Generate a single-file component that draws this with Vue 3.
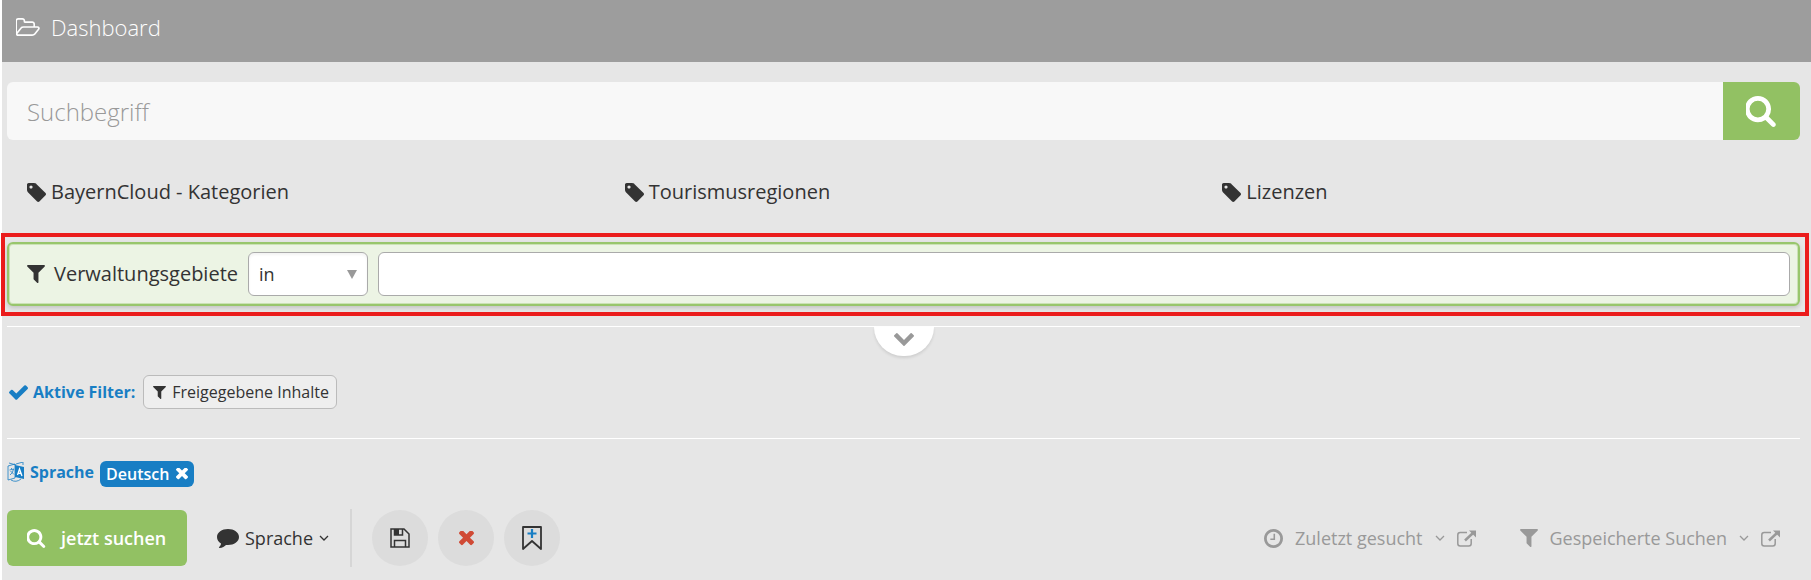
<script setup>
import { ref, h } from 'vue'

const query = ref('')
const area = ref('')
const operator = ref('in')
const categories = ['BayernCloud - Kategorien', 'Tourismusregionen', 'Lizenzen']

const icons = {
  search: ['128 128 1664 1664', 'M1216 832q0-185-131.5-316.5t-316.5-131.5-316.5 131.5-131.5 316.5 131.5 316.5 316.5 131.5 316.5-131.5 131.5-316.5zm512 832q0 52-38 90t-90 38q-54 0-90-38l-343-342q-179 124-399 124-143 0-273.5-55.5t-225-150-150-225-55.5-273.5 55.5-273.5 150-225 225-150 273.5-55.5 273.5 55.5 225 150 150 225 55.5 273.5q0 220-124 399l343 343q37 37 37 90z'],
  filter: ['190 256 1412 1408', 'M1595 295q17 41-14 70l-493 493v742q0 42-39 59-13 5-25 5-27 0-45-19l-256-256q-19-19-19-45v-486l-493-493q-31-29-14-70 17-39 59-39h1280q42 0 59 39z'],
  times: ['302 434 1188 1188', 'M1490 1322q0 40-28 68l-136 136q-28 28-68 28t-68-28l-294-294-294 294q-28 28-68 28t-68-28l-136-136q-28-28-28-68t28-68l294-294-294-294q-28-28-28-68t28-68l136-136q28-28 68-28t68 28l294 294 294-294q28-28 68-28t68 28l136 136q28 28 28 68t-28 68l-294 294 294 294q28 28 28 68z'],
  check: ['121 334 1550 1188', 'M1671 566q0 40-28 68l-724 724-136 136q-28 28-68 28t-68-28l-136-136-362-362q-28-28-28-68t28-68l136-136q28-28 68-28t68 28l294 295 656-657q28-28 68-28t68 28l136 136q28 28 28 68z'],
  tag: ['128 128 1515 1515', 'M576 448q0-53-37.5-90.5t-90.5-37.5-90.5 37.5-37.5 90.5 37.5 90.5 90.5 37.5 90.5-37.5 37.5-90.5zm1067 576q0 53-37 90l-491 492q-39 37-91 37-53 0-90-37l-715-716q-38-37-64.5-101t-26.5-117v-416q0-52 38-90t90-38h416q53 0 117 26.5t102 64.5l715 714q37 39 37 91z'],
  folder: ['0 128 1845 1408', 'M1717 931q0-35-53-35h-1088q-40 0-85.5 21.5t-71.5 52.5l-294 363q-18 24-18 40 0 35 53 35h1088q40 0 86-22t71-53l294-363q18-22 18-39zm-1141-163h768v-160q0-40-28-68t-68-28h-576q-40 0-68-28t-28-68v-64q0-40-28-68t-68-28h-320q-40 0-68 28t-28 68v853l256-315q44-53 116-87.5t140-34.5zm1269 163q0 62-46 120l-295 363q-43 53-116 87.5t-140 34.5h-1088q-92 0-158-66t-66-158v-960q0-92 66-158t158-66h320q92 0 158 66t66 158v32h544q92 0 158 66t66 158v160h192q54 0 99 24.5t67 70.5q15 32 15 68z'],
  clock: ['128 128 1536 1536', 'M1024 544v448q0 14-9 23t-23 9h-320q-14 0-23-9t-9-23v-64q0-14 9-23t23-9h224v-352q0-14 9-23t23-9h64q14 0 23 9t9 23zm416 352q0-148-73-273t-198-198-273-73-273 73-198 198-73 273 73 273 198 198 273 73 273-73 198-198 73-273zm224 0q0 209-103 385.5t-279.5 279.5-385.5 103-385.5-103-279.5-279.5-103-385.5 103-385.5 279.5-279.5 385.5-103 385.5 103 279.5 279.5 103 385.5z'],
  chevron: ['90 533 1612 1035', 'M1683 808l-742 741q-19 19-45 19t-45-19l-742-741q-19-19-19-45.5t19-45.5l166-165q19-19 45-19t45 19l531 531 531-531q19-19 45-19t45 19l166 165q19 19 19 45.5t-19 45.5z'],
  comment: ['0 0 22 19', 'M11 0C17 0 22 3.500 22 8S17 16 11 16l-2-.1C7.500 17.500 5.500 18.600 2.500 19c-.6 0-.8-.5-.3-.9 1-.8 1.600-1.800 1.800-3.500C1.500 13 0 10.700 0 8 0 3.500 5 0 11 0z'],
  arrow: ['0 0 10 9', 'M0 0h10L5 9z']
}

const Icon = (props) =>
  h('svg', { viewBox: icons[props.name][0], fill: 'currentColor', 'aria-hidden': 'true' }, [
    h('path', { d: icons[props.name][1] })
  ])
Icon.props = ['name']
</script>

<template>
  <div class="page">
    <header class="topbar">
      <Icon name="folder" class="i-folder" />
      <h1>Dashboard</h1>
    </header>

    <main>
      <form class="search" @submit.prevent>
        <input v-model="query" type="search" placeholder="Suchbegriff" aria-label="Suchbegriff" />
        <button type="submit" aria-label="Suchen"><Icon name="search" class="i-search-big" /></button>
      </form>

      <nav class="categories">
        <a v-for="c in categories" :key="c" href="#"><Icon name="tag" class="i-tag" />{{ c }}</a>
      </nav>

      <div class="highlight">
        <section class="region">
          <label for="area"><Icon name="filter" class="i-filter" />Verwaltungsgebiete</label>
          <div class="operator">
            <select v-model="operator" aria-label="Operator">
              <option value="in">in</option>
              <option value="nicht in">nicht in</option>
            </select>
            <Icon name="arrow" class="i-arrow" />
          </div>
          <input id="area" v-model="area" type="text" />
        </section>
      </div>

      <div class="divider">
        <button class="expand" type="button" aria-label="Weitere Filter"><Icon name="chevron" class="i-chevron" /></button>
      </div>

      <div class="active">
        <span class="caption"><Icon name="check" class="i-check" />Aktive Filter:</span>
        <button class="chip" type="button"><Icon name="filter" class="i-filter-small" />Freigegebene Inhalte</button>
      </div>

      <div class="language">
        <span class="caption">
          <svg class="i-lang" viewBox="0 0 18 20" aria-hidden="true">
            <path d="M1 4l7-2v14l-7 2zM2 1l7 2M9 2l7-2v3M4 18q5 3 10-1" fill="none" stroke="currentColor" stroke-width=".8" />
            <path d="M8 3l9 2v12l-9-2z" fill="currentColor" />
            <path d="M2.500 8l4.500-1M4 6l1 1M6.500 7Q6 11 3 13M3.500 9l3.500 3.500" fill="none" stroke="currentColor" stroke-width=".8" />
            <path d="M10.500 13l2-6 2.500 7M11 11l3 .6" fill="none" stroke="#fff" stroke-width="1.300" />
          </svg>Sprache
        </span>
        <button class="selected" type="button">Deutsch<Icon name="times" class="i-times-small" /></button>
      </div>

      <footer class="toolbar">
        <button class="submit" type="button"><Icon name="search" class="i-search" />jetzt suchen</button>
        <button class="plain lang-menu" type="button">
          <Icon name="comment" class="i-comment" />Sprache
          <svg class="i-caret" viewBox="0 0 10 6" aria-hidden="true"><path d="M1 1l4 4 4-4" fill="none" stroke="currentColor" stroke-width="1.300" /></svg>
        </button>
        <div class="rounds">
          <button type="button" aria-label="Speichern">
            <svg class="i-save" viewBox="0 0 20 20" fill="none" stroke="currentColor" stroke-width="1.500" aria-hidden="true">
              <path d="M1 1h13l5 5v13H1zM4.500 19v-6.500h11V19M4.500 1v6h8V1" />
              <path d="M4.500 1H9v6H4.500z" fill="currentColor" stroke="none" />
            </svg>
          </button>
          <button class="danger" type="button" aria-label="Zurücksetzen"><Icon name="times" class="i-times" /></button>
          <button type="button" aria-label="Suche merken">
            <svg class="i-bookmark" viewBox="0 0 20 24" fill="none" aria-hidden="true">
              <path d="M1 1h18v22l-9-8-9 8z" stroke="currentColor" stroke-width="1.800" stroke-linejoin="round" />
              <path d="M10 3v9M5.500 7.500h9" stroke="#187ec4" stroke-width="2.200" />
            </svg>
          </button>
        </div>
        <div class="history">
          <div v-for="item in [['clock', 'Zuletzt gesucht'], ['filter', 'Gespeicherte Suchen']]" :key="item[0]" class="entry">
            <button class="plain" type="button">
              <Icon :name="item[0]" :class="item[0] === 'clock' ? 'i-clock' : 'i-filter'" />{{ item[1] }}
              <svg class="i-caret" viewBox="0 0 10 6" aria-hidden="true"><path d="M1 1l4 4 4-4" fill="none" stroke="currentColor" stroke-width="1.300" /></svg>
            </button>
            <a href="#" :aria-label="item[1] + ' öffnen'">
              <svg class="i-external" viewBox="0 0 19 17" fill="none" aria-hidden="true">
                <path d="M10 2.500H3.200Q.8 2.500.8 5v8.500Q.8 16 3.200 16h8.600q2.400 0 2.400-2.500V9" stroke="currentColor" stroke-width="1.500" />
                <path d="M8 10.500L16 3" stroke="currentColor" stroke-width="2.500" />
                <path d="M12 .5h7v7z" fill="currentColor" />
              </svg>
            </a>
          </div>
        </div>
      </footer>
    </main>
  </div>
</template>

<style>
html { background: #fff; }
</style>

<style scoped>
* { box-sizing: border-box; }
.page {
  min-height: 100vh;
  margin-left: 2px;
  background: #e6e6e6;
  color: #333;
  font: 20px/28px "Open Sans", sans-serif;
}
svg { display: block; flex: none; }
button, input, select { font: inherit; color: inherit; margin: 0; }
button { border: 0; padding: 0; background: none; cursor: pointer; display: flex; align-items: center; }
a { color: inherit; text-decoration: none; }

.topbar { display: flex; align-items: center; height: 62px; padding: 0 14px 8px; gap: 11px; background: #9d9d9d; color: #fff; }
.topbar h1 { margin: 0; font-size: 22px; font-weight: 300; }
main { padding: 20px 11px 14px 5px; }

.search { display: flex; height: 58px; border-radius: 6px; overflow: hidden; }
.search input { flex: 1; min-width: 0; border: 0; padding: 2px 20px 0; background: #f8f8f8; font-size: 24px; font-weight: 300; outline: 0; appearance: none; }
.search input::placeholder { color: #999; opacity: 1; }
.search button { width: 77px; justify-content: center; background: #92c163; color: #fff; }

.categories { display: grid; grid-template-columns: repeat(3, 1fr); margin-top: 38px; }
.categories a { display: flex; align-items: center; gap: 5px; padding-left: 20px; }

.highlight { margin: 27px -9px 0 -6px; border: 4px solid #eb1c1c; padding: 5px 5px 6px 2px; }
.region {
  display: flex; align-items: center; height: 64px; padding: 0 8px 0 18px;
  border: 2px solid #98c66c; border-radius: 6px; background: #ecf4e4;
  box-shadow: inset 0 0 0 1px #cbe2b5, 0 2px 4px rgba(0, 0, 0, .15);
}
.region label { display: flex; align-items: center; gap: 9px; margin-right: 10px; }
.operator { position: relative; margin-right: 10px; }
.operator select { display: block; width: 120px; height: 44px; padding: 0 10px; border: 1px solid #aaa; border-radius: 6px; background: #fff; font-size: 18px; appearance: none; box-shadow: inset 0 2px 3px rgba(0, 0, 0, .05); }
.i-arrow { position: absolute; right: 11px; top: 18px; width: 10px; height: 9px; color: #999; pointer-events: none; }
.region > input { flex: 1; min-width: 0; height: 44px; padding: 0 10px; border: 1px solid #aaa; border-radius: 6px; background: #fff; }

.divider { height: 31px; margin-top: 10px; border-top: 1px solid #fff; display: flex; justify-content: center; }
.expand { width: 60px; height: 29px; justify-content: center; padding-bottom: 5px; border-radius: 0 0 30px 30px; background: #fff; color: #999; box-shadow: 0 2px 3px rgba(0, 0, 0, .1); }

.caption { display: flex; align-items: center; color: #187ec4; font-size: 16px; font-weight: 700; }
.active { display: flex; align-items: center; gap: 8px; height: 34px; margin-top: 18px; padding-left: 2px; }
.active .caption { gap: 5px; }
.chip { height: 34px; padding: 0 7px 0 9px; gap: 6px; border: 1px solid #bbb; border-radius: 6px; background: #eee; font-size: 16px; }

.language { display: flex; align-items: center; gap: 6px; margin-top: 29px; padding-top: 22px; border-top: 1px solid #fff; }
.language .caption { gap: 5px; padding-bottom: 4px; height: 26px; }
.selected { height: 26px; padding: 0 6px; gap: 7px; border-radius: 6px; background: #187ec4; color: #fff; font-size: 16px; font-weight: 600; }

.toolbar { display: flex; align-items: center; height: 58px; margin-top: 22px; font-size: 18px; }
.submit { width: 180px; height: 56px; padding-left: 20px; gap: 15px; border-radius: 6px; background: #92c163; color: #fff; font-weight: 600; }
.plain { gap: 6px; }
.lang-menu { margin-left: 30px; padding-right: 21px; }
.rounds { display: flex; align-items: center; gap: 10px; height: 58px; padding-left: 20px; border-left: 2px solid #d6d6d6; }
.rounds button { width: 56px; height: 56px; justify-content: center; border-radius: 50%; background: #dcdcdc; }
.rounds .danger { color: #d04a35; }
.history { display: flex; gap: 44px; margin-left: auto; padding-right: 20px; color: #999; }
.entry { display: flex; align-items: center; gap: 12px; }
.entry .plain { gap: 12px; }

.i-folder { width: 24px; height: 18px; }
.i-search-big { width: 31px; height: 31px; }
.i-search, .i-clock, .i-tag { width: 19px; height: 19px; }
.i-filter { width: 18px; height: 18px; }
.i-filter-small { width: 13px; height: 13px; }
.i-check { width: 19px; height: 15px; }
.i-chevron { width: 20px; height: 13px; }
.i-lang { width: 18px; height: 20px; }
.i-times-small { width: 12px; height: 12px; }
.i-times { width: 15px; height: 15px; }
.i-comment { width: 22px; height: 19px; }
.i-caret { width: 10px; height: 6px; }
.i-save { width: 20px; height: 20px; }
.i-bookmark { width: 20px; height: 24px; }
.i-external { width: 19px; height: 17px; }
</style>
